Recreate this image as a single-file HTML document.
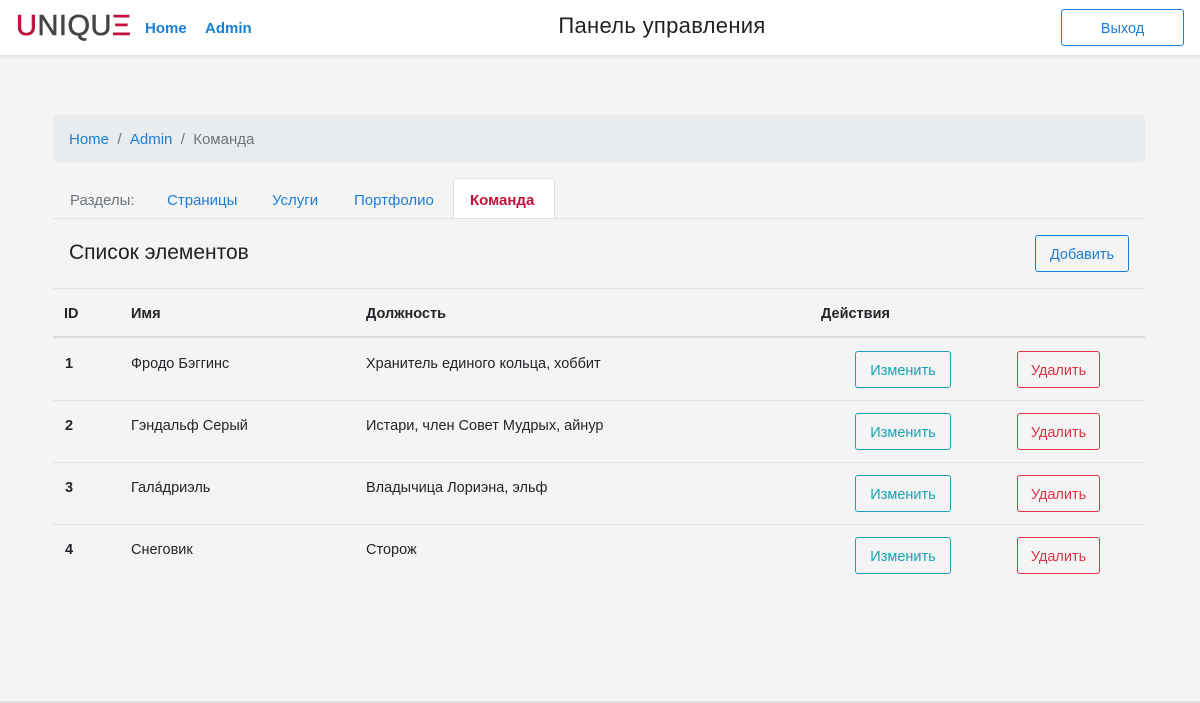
<!DOCTYPE html>
<html><head><meta charset="utf-8"><style>
*{box-sizing:border-box;margin:0;padding:0}
body{width:1200px;height:703px;background:#f4f4f4;font-family:"Liberation Sans","DejaVu Sans",sans-serif;position:relative;overflow:hidden;color:#212529}
.hdr{position:absolute;left:0;top:0;width:1200px;height:55px;background:#fff;box-shadow:0 1px 4px rgba(0,0,0,.12)}
.logo{position:absolute;left:16px;top:11px;font-size:29px;font-weight:normal;color:#444;font-family:"Liberation Sans",sans-serif;line-height:30px;letter-spacing:0.5px;-webkit-text-stroke:0.6px currentColor}
.logo .r{color:#c3113d}
.nav{position:absolute;top:20px;font-size:15px;font-weight:bold;color:#1a7ed6}
.title{position:absolute;left:0;width:1324px;text-align:center;top:13px;font-size:22px;color:#222;font-family:"Liberation Sans",sans-serif;letter-spacing:0.3px}
.btn{position:absolute;border:1px solid;border-radius:3px;text-align:center;font-size:14.5px;background:transparent}
.bc{position:absolute;left:53px;top:115px;width:1092px;height:47px;background:#e9ecef;border-radius:3px;font-size:15px;line-height:49px;padding-left:16px;color:#6c757d}
.bc a{color:#1a7ed6}
.tab{position:absolute;top:192px;font-size:15px;color:#1a7ed6}
.line{position:absolute;left:53px;width:1092px;background:#e2e2e2;height:1px}
.t{position:absolute;font-size:14.5px}
.b{font-weight:bold}
</style></head><body>
<div class="hdr">
<div class="logo"><span class="r">U</span>NIQU<span class="r">Ξ</span></div>
<div class="nav" style="left:145px">Home</div>
<div class="nav" style="left:205px">Admin</div>
<div class="title">Панель управления</div>
<div class="btn" style="left:1061px;top:9px;width:123px;height:37px;line-height:39px;border-color:#1a7ed6;color:#1a7ed6">Выход</div>
</div>
<div class="bc"><a>Home</a>&nbsp; / &nbsp;<a>Admin</a>&nbsp; / &nbsp;Команда</div>
<div class="tab" style="left:70px;color:#6c757d">Разделы:</div>
<div class="tab" style="left:167px">Страницы</div>
<div class="tab" style="left:272px">Услуги</div>
<div class="tab" style="left:354px">Портфолио</div>
<div style="position:absolute;left:453px;top:178px;width:102px;height:41px;background:#fff;border:1px solid #e2e2e2;border-bottom:none;border-radius:3px 3px 0 0"></div>
<div class="tab b" style="left:470px;color:#c3113d">Команда</div>
<div class="line" style="top:218px"></div>
<div class="t" style="left:69px;top:241px;font-size:21px;color:#222">Список элементов</div>
<div class="btn" style="left:1035px;top:235px;width:94px;height:37px;line-height:39px;border-color:#1a7ed6;color:#1a7ed6">Добавить</div>
<div class="line" style="top:288px"></div>
<div class="t b" style="left:64px;top:306px">ID</div>
<div class="t b" style="left:131px;top:306px">Имя</div>
<div class="t b" style="left:366px;top:306px">Должность</div>
<div class="t b" style="left:821px;top:306px">Действия</div>
<div class="line" style="top:336px;height:2px;background:#dcdcdc"></div>
<div class="t b" style="left:65px;top:356px">1</div><div class="t" style="left:131px;top:356px">Фродо Бэггинс</div><div class="t" style="left:366px;top:356px">Хранитель единого кольца, хоббит</div>
<div class="line" style="top:400px"></div>
<div class="t b" style="left:65px;top:418px">2</div><div class="t" style="left:131px;top:418px">Гэндальф Серый</div><div class="t" style="left:366px;top:418px">Истари, член Совет Мудрых, айнур</div>
<div class="line" style="top:462px"></div>
<div class="t b" style="left:65px;top:480px">3</div><div class="t" style="left:131px;top:480px">Гала́дриэль</div><div class="t" style="left:366px;top:480px">Владычица Лориэна, эльф</div>
<div class="line" style="top:524px"></div>
<div class="t b" style="left:65px;top:542px">4</div><div class="t" style="left:131px;top:542px">Снеговик</div><div class="t" style="left:366px;top:542px">Сторож</div>
<div class="btn" style="left:855px;top:351px;width:96px;height:37px;line-height:39px;border-color:#17a2b8;color:#17a2b8">Изменить</div>
<div class="btn" style="left:1017px;top:351px;width:83px;height:37px;line-height:39px;border-color:#dc3545;color:#dc3545">Удалить</div>
<div class="btn" style="left:855px;top:413px;width:96px;height:37px;line-height:39px;border-color:#17a2b8;color:#17a2b8">Изменить</div>
<div class="btn" style="left:1017px;top:413px;width:83px;height:37px;line-height:39px;border-color:#dc3545;color:#dc3545">Удалить</div>
<div class="btn" style="left:855px;top:475px;width:96px;height:37px;line-height:39px;border-color:#17a2b8;color:#17a2b8">Изменить</div>
<div class="btn" style="left:1017px;top:475px;width:83px;height:37px;line-height:39px;border-color:#dc3545;color:#dc3545">Удалить</div>
<div class="btn" style="left:855px;top:537px;width:96px;height:37px;line-height:39px;border-color:#17a2b8;color:#17a2b8">Изменить</div>
<div class="btn" style="left:1017px;top:537px;width:83px;height:37px;line-height:39px;border-color:#dc3545;color:#dc3545">Удалить</div>
<div style="position:absolute;left:0;top:701px;width:1200px;height:2px;background:#e0e0e0"></div>
</body></html>
